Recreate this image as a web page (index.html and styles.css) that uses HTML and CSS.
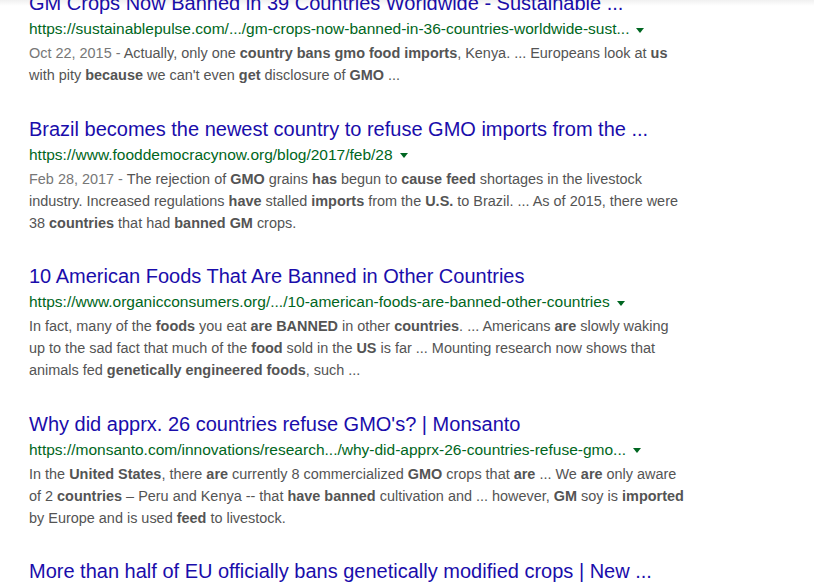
FILE: index.html
```html
<!DOCTYPE html>
<html>
<head>
<meta charset="utf-8">
<link rel="stylesheet" href="styles.css">
</head>
<body>
<div class="topshade"></div>
<div class="results">
  <div class="result">
    <a class="title">GM Crops Now Banned in 39 Countries Worldwide - Sustainable ...</a>
    <div class="url"><cite>https://sustainablepulse.com/.../gm-crops-now-banned-in-36-countries-worldwide-sust...</cite><span class="arrow"></span></div>
    <div class="snippet"><span class="date">Oct 22, 2015 - </span>Actually, only one <b>country bans gmo food imports</b>, Kenya. ... Europeans look at <b>us</b><br>with pity <b>because</b> we can't even <b>get</b> disclosure of <b>GMO</b> ...</div>
  </div>
  <div class="result">
    <a class="title">Brazil becomes the newest country to refuse GMO imports from the ...</a>
    <div class="url"><cite>https://www.fooddemocracynow.org/blog/2017/feb/28</cite><span class="arrow"></span></div>
    <div class="snippet"><span class="date">Feb 28, 2017 - </span>The rejection of <b>GMO</b> grains <b>has</b> begun to <b>cause feed</b> shortages in the livestock<br>industry. Increased regulations <b>have</b> stalled <b>imports</b> from the <b>U.S.</b> to Brazil. ... As of 2015, there were<br>38 <b>countries</b> that had <b>banned GM</b> crops.</div>
  </div>
  <div class="result">
    <a class="title">10 American Foods That Are Banned in Other Countries</a>
    <div class="url"><cite>https://www.organicconsumers.org/.../10-american-foods-are-banned-other-countries</cite><span class="arrow"></span></div>
    <div class="snippet">In fact, many of the <b>foods</b> you eat <b>are BANNED</b> in other <b>countries</b>. ... Americans <b>are</b> slowly waking<br>up to the sad fact that much of the <b>food</b> sold in the <b>US</b> is far ... Mounting research now shows that<br>animals fed <b>genetically engineered foods</b>, such ...</div>
  </div>
  <div class="result">
    <a class="title">Why did apprx. 26 countries refuse GMO's? | Monsanto</a>
    <div class="url"><cite>https://monsanto.com/innovations/research.../why-did-apprx-26-countries-refuse-gmo...</cite><span class="arrow"></span></div>
    <div class="snippet">In the <b>United States</b>, there <b>are</b> currently 8 commercialized <b>GMO</b> crops that <b>are</b> ... We <b>are</b> only aware<br>of 2 <b>countries</b> – Peru and Kenya -- that <b>have banned</b> cultivation and ... however, <b>GM</b> soy is <b>imported</b><br>by Europe and is used <b>feed</b> to livestock.</div>
  </div>
  <div class="result">
    <a class="title">More than half of EU officially bans genetically modified crops | New ...</a>
  </div>
</div>
</body>
</html>
```

FILE: styles.css
```css
html, body {
  margin: 0;
  padding: 0;
  background: #fff;
  overflow: hidden;
}
body {
  width: 814px;
  height: 584px;
  font-family: "Liberation Sans", Arial, sans-serif;
  position: relative;
}
.topshade {
  position: absolute;
  left: 0;
  top: 0;
  right: 0;
  height: 6px;
  background: linear-gradient(to bottom, rgba(0,0,0,0.06), rgba(0,0,0,0));
  z-index: 2;
}
.results {
  margin-top: -9px;
  padding-left: 29px;
  display: flex;
  flex-direction: column;
  gap: 30.5px;
}
.result {
  display: flex;
  flex-direction: column;
}
.title {
  display: block;
  font-size: 20px;
  line-height: 24px;
  color: #1a0dab;
  white-space: nowrap;
}
.url {
  margin-top: 2px;
  height: 24px;
  display: flex;
  align-items: center;
  font-size: 15.5px;
  color: #006621;
  white-space: nowrap;
}
.url cite {
  font-style: normal;
}
.arrow {
  margin-left: 7px;
  margin-top: 2px;
  width: 0;
  height: 0;
  border-top: 5px solid #006621;
  border-left: 4px solid transparent;
  border-right: 4px solid transparent;
}
.snippet {
  margin-top: 1px;
  font-size: 14.45px;
  line-height: 22px;
  color: #545454;
  white-space: nowrap;
}
.snippet b {
  font-weight: bold;
}
.date {
  color: #777;
}
```
